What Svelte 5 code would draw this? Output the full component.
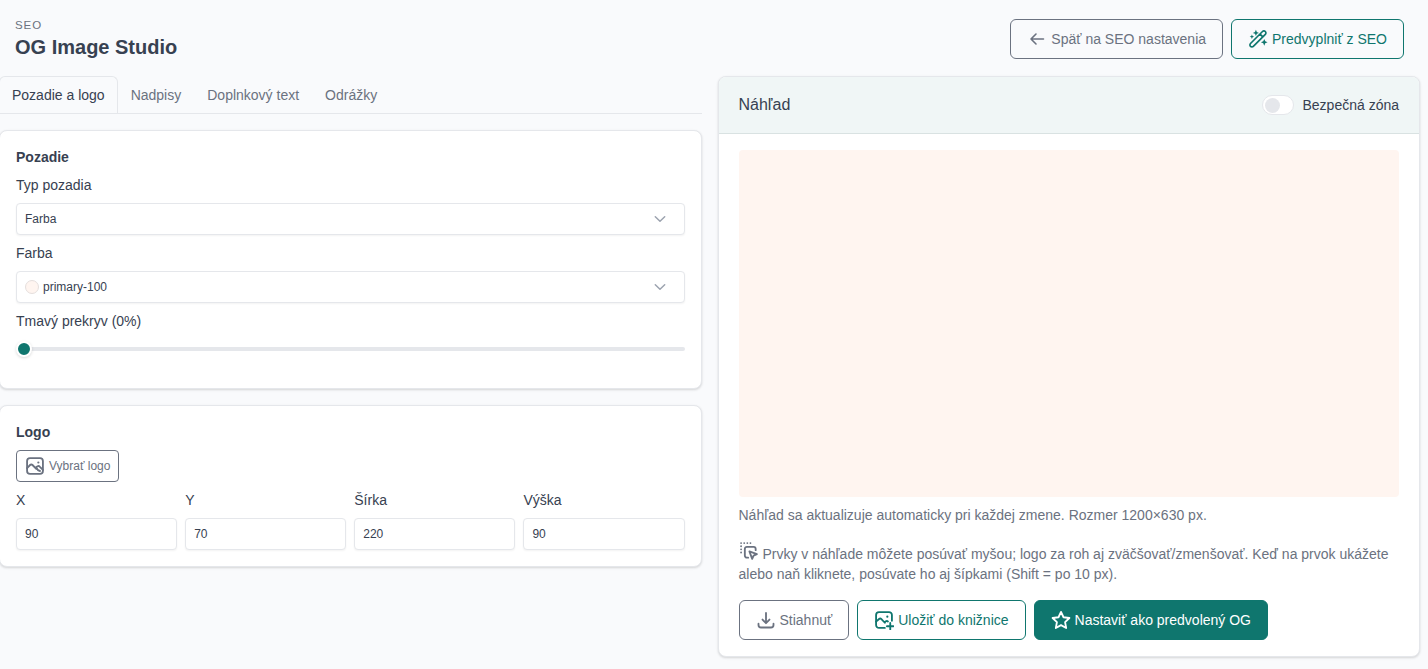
<script>
	const tabs = ["Pozadie a logo", "Nadpisy", "Doplnkový text", "Odrážky"];
	let active = $state(0);

	let overlay = $state(0);
	let safe_zone = $state(false);

	const fields = $state([
		{ label: "X", value: 90 },
		{ label: "Y", value: 70 },
		{ label: "Šírka", value: 220 },
		{ label: "Výška", value: 90 },
	]);
</script>

{#snippet chevron()}
	<svg class="chevron" viewBox="0 0 16 16" width="16" height="16"><path d="M3.300 5.800L8 10.300l4.700-4.500" /></svg>
{/snippet}

<div class="page">
	<header class="top">
		<div>
			<div class="eyebrow">SEO</div>
			<h1>OG Image Studio</h1>
		</div>
		<div class="actions">
			<button class="btn back">
				<svg viewBox="0 0 18 18" width="18" height="18">
					<path d="M15.500 9H3M8 4L3 9l5 5" />
				</svg>
				Späť na SEO nastavenia
			</button>
			<button class="btn primary">
				<svg class="wand" viewBox="0 0 24 24" width="20" height="20">
					<path d="M3 17.400L17.400 3a2.300 2.300 0 0 1 3.400 3.400L6.400 20.800A2.300 2.300 0 0 1 3 17.400zM14.500 6.200l3.200 3.200" />
					<path class="solid" d="M9.500 1l1.100 2.600 2.600 1.100-2.600 1.100-1.100 2.600-1.100-2.600L5.800 4.700l2.600-1.100zM4.700 6.500l.8 1.900 1.900.8-1.900.8-.8 1.900-.8-1.900L2 9.200l1.900-.8zM19.500 12l1.200 2.800 2.800 1.200-2.800 1.200-1.200 2.800-1.200-2.800-2.800-1.200 2.800-1.200z" />
				</svg>
				Predvyplniť z SEO
			</button>
		</div>
	</header>

	<div class="columns">
		<div class="settings">
			<nav class="tabs">
				{#each tabs as tab, i}
					<button class:active={i === active} onclick={() => (active = i)}>{tab}</button>
				{/each}
			</nav>

			<section class="card">
				<h2>Pozadie</h2>
				<div class="label">Typ pozadia</div>
				<div class="control select">Farba {@render chevron()}</div>
				<div class="label">Farba</div>
				<div class="control select">
					<span class="color"><span class="swatch"></span>primary-100</span>
					{@render chevron()}
				</div>
				<label class="label" for="overlay">Tmavý prekryv ({overlay}%)</label>
				<input id="overlay" class="range" type="range" min="0" max="100" bind:value={overlay} />
			</section>

			<section class="card logo">
				<h2>Logo</h2>
				<button class="btn small">
					<svg viewBox="0 0 24 24" width="20" height="20">
						<rect x="2.500" y="2.500" width="19" height="19" rx="3.500" />
						<path d="M2.500 14.500l3.600-3.700a2 2 0 0 1 2.900 0l4.500 4.700M13.500 13.200l1.600-.9a2 2 0 0 1 2.500.4l3.900 4M14 14.500c.5 1.900 1.600 3 4 3.500" />
						<circle class="solid" cx="16" cy="7.800" r="1.300" />
					</svg>
					Vybrať logo
				</button>
				<div class="fields">
					{#each fields as field}
						<label>
							<span class="label">{field.label}</span>
							<input class="control" type="text" bind:value={field.value} />
						</label>
					{/each}
				</div>
			</section>
		</div>

		<section class="card preview">
			<header>
				<h3>Náhľad</h3>
				<label class="switch">
					<input type="checkbox" bind:checked={safe_zone} />
					<span class="track"></span>
					Bezpečná zóna
				</label>
			</header>
			<div class="body">
				<div class="canvas"></div>
				<p>Náhľad sa aktualizuje automaticky pri každej zmene. Rozmer 1200×630 px.</p>
				<p class="hint">
					<svg viewBox="0 0 24 24" width="20" height="20">
						<path d="M11 20H9.500A2.500 2.500 0 0 1 7 17.500v-8A2.500 2.500 0 0 1 9.500 7h8A2.500 2.500 0 0 1 20 9.500V11" />
						<path d="M12.500 12.500l9 3.300-4 1.700-1.700 4z" />
						<path class="dots" d="M2.500 2.500h15M2.500 6.250v11.250" />
					</svg>
					Prvky v náhľade môžete posúvať myšou; logo za roh aj zväčšovať/zmenšovať. Keď na prvok ukážete alebo naň kliknete, posúvate ho aj šípkami (Shift = po 10 px).
				</p>
				<div class="actions">
					<button class="btn">
						<svg viewBox="0 0 24 24" width="20" height="20">
							<path d="M12 3.500v12M7.800 11.500L12 15.800l4.200-4.300M3 16.500v1.500a3 3 0 0 0 3 3h12a3 3 0 0 0 3-3v-1.500" />
						</svg>
						Stiahnuť
					</button>
					<button class="btn primary">
						<svg viewBox="0 0 24 24" width="20" height="20">
							<path d="M13 21.500H6A3.500 3.500 0 0 1 2.500 18V6A3.500 3.500 0 0 1 6 2.500h12A3.500 3.500 0 0 1 21.500 6v7" />
							<path d="M2.500 14l3.600-3.200a2 2 0 0 1 2.800.1l4.100 4.400M13 14.500l1.300-.9a2 2 0 0 1 2.400.1M19.500 15.500v8M15.500 19.500h8" />
							<circle class="solid" cx="16" cy="8" r="1.300" />
						</svg>
						Uložiť do knižnice
					</button>
					<button class="btn filled">
						<svg viewBox="0 0 24 24" width="20" height="20">
							<path d="M12 2.200l3 6.500 7.100.9-5.200 4.900 1.300 7.100-6.200-3.500-6.200 3.500 1.300-7.100L1.900 9.600 9 8.700z" />
						</svg>
						Nastaviť ako predvolený OG
					</button>
				</div>
			</div>
		</section>
	</div>
</div>

<style>
	:global(body) {
		background: #f9fafc;
	}

	.page {
		--ink: #374151;
		--muted: #6b7280;
		--line: #e5e7eb;
		--teal: #0f766e;
		min-height: 669px;
		box-sizing: border-box;
		padding-top: 17px;
		font: 14px/20px "Liberation Sans", Arial, sans-serif;
		color: var(--ink);
		overflow: hidden;
	}

	.page *,
	.page *::before {
		box-sizing: border-box;
	}

	h1,
	h2,
	h3,
	p {
		margin: 0;
	}

	button,
	input {
		font: inherit;
	}

	.top {
		display: flex;
		justify-content: space-between;
		height: 59px;
		padding: 0 24px 0 15px;
	}

	.eyebrow {
		font-size: 11.5px;
		line-height: 16px;
		letter-spacing: 0.9px;
		color: var(--muted);
	}

	h1 {
		font-size: 20px;
		line-height: 28px;
	}

	.actions {
		display: flex;
		gap: 8px;
	}

	.top .actions {
		padding-top: 2px;
	}

	.btn {
		display: flex;
		align-items: center;
		gap: 4px;
		height: 40px;
		padding: 0 16px;
		border: 1px solid var(--muted);
		border-radius: 6px;
		background: transparent;
		color: var(--muted);
		white-space: nowrap;
	}

	.btn.back {
		gap: 5px;
		padding-left: 17px;
	}

	.btn.primary {
		border-color: var(--teal);
		color: var(--teal);
	}

	.btn.filled {
		border-color: var(--teal);
		background: var(--teal);
		color: #fff;
	}

	.btn.small {
		height: 32px;
		padding: 0 8px;
		border-radius: 4px;
		font-size: 12px;
	}

	svg {
		flex: none;
		fill: none;
		stroke: currentColor;
		stroke-width: 2.2;
		stroke-linecap: round;
		stroke-linejoin: round;
	}

	.back svg {
		stroke-width: 1.6;
	}

	svg .solid {
		fill: currentColor;
		stroke: none;
	}

	svg.wand {
		stroke-width: 2;
	}

	svg .dots {
		stroke-dasharray: 0 3.75;
	}

	.columns {
		display: grid;
		grid-template-columns: 702.5px 702px;
		gap: 16px;
		align-items: start;
		margin-left: -1px;
	}

	.tabs {
		display: flex;
		height: 38px;
		margin-bottom: 16px;
		border-bottom: 1px solid var(--line);
	}

	.tabs button {
		height: 37px;
		padding: 0 12px;
		border: 1px solid transparent;
		border-bottom: none;
		border-radius: 6px 6px 0 0;
		background: none;
		color: var(--muted);
	}

	.tabs button.active {
		border-color: var(--line);
		color: var(--ink);
	}

	.card {
		border: 1px solid var(--line);
		border-radius: 8px;
		background: #fff;
		box-shadow: 0 1px 3px rgba(0, 0, 0, 0.1), 0 1px 2px rgba(0, 0, 0, 0.06);
	}

	.settings .card {
		height: 259px;
		padding: 16px;
	}

	.settings .card.logo {
		height: 162px;
		margin-top: 16px;
	}

	h2 {
		margin-bottom: 8px;
		font-size: 14px;
		line-height: 20px;
	}

	.label {
		display: block;
		margin-bottom: 8px;
	}

	.control {
		display: block;
		width: 100%;
		height: 32px;
		margin: 0 0 8px;
		padding: 0 8px;
		border: 1px solid var(--line);
		border-radius: 4px;
		background: #fff;
		box-shadow: 0 1px 2px rgba(0, 0, 0, 0.05);
		color: var(--ink);
		font-size: 12px;
	}

	.select {
		display: flex;
		align-items: center;
		justify-content: space-between;
		padding-right: 16px;
	}

	.chevron {
		color: #9ca3af;
		stroke-width: 1.5;
	}

	.color {
		display: flex;
		align-items: center;
		gap: 4px;
	}

	.swatch {
		width: 14px;
		height: 14px;
		border: 1px solid #e5dfdd;
		border-radius: 50%;
		background: #fff5f0;
	}

	.range {
		display: block;
		width: 100%;
		height: 20px;
		margin: 0;
		background: transparent;
		appearance: none;
	}

	.range::-webkit-slider-runnable-track {
		height: 4px;
		border-radius: 2px;
		background: var(--line);
	}

	.range::-webkit-slider-thumb {
		width: 16px;
		height: 16px;
		margin-top: -6px;
		border: 2px solid #fff;
		border-radius: 50%;
		background: var(--teal);
		box-shadow: 0 1px 3px rgba(0, 0, 0, 0.15);
		appearance: none;
	}

	.logo .btn {
		margin-bottom: 8px;
	}

	.fields {
		display: grid;
		grid-template-columns: repeat(4, 1fr);
		gap: 8px;
	}

	.preview header {
		display: flex;
		align-items: center;
		justify-content: space-between;
		height: 57px;
		padding: 0 19.5px 0 20px;
		border-bottom: 1px solid #d9e2e2;
		border-radius: 7px 7px 0 0;
		background: #f0f6f6;
	}

	h3 {
		font-size: 16px;
		font-weight: normal;
	}

	.switch {
		display: flex;
		align-items: center;
		gap: 8px;
	}

	.switch input {
		display: none;
	}

	.track {
		width: 32px;
		height: 20px;
		padding: 2px;
		border: 1px solid var(--line);
		border-radius: 10px;
		background: #fff;
	}

	.track::before {
		content: "";
		display: block;
		width: 15px;
		height: 15px;
		border-radius: 50%;
		background: var(--line);
	}

	.switch input:checked + .track::before {
		margin-left: 11px;
		background: var(--teal);
	}

	.body {
		height: 522px;
		padding: 16px 20px;
		color: var(--muted);
	}

	.canvas {
		aspect-ratio: 1200 / 630;
		margin-bottom: 8px;
		border-radius: 4px;
		background: #fff5f0;
	}

	.hint {
		margin: 16px 0;
	}

	.hint svg {
		vertical-align: -2px;
	}
</style>
